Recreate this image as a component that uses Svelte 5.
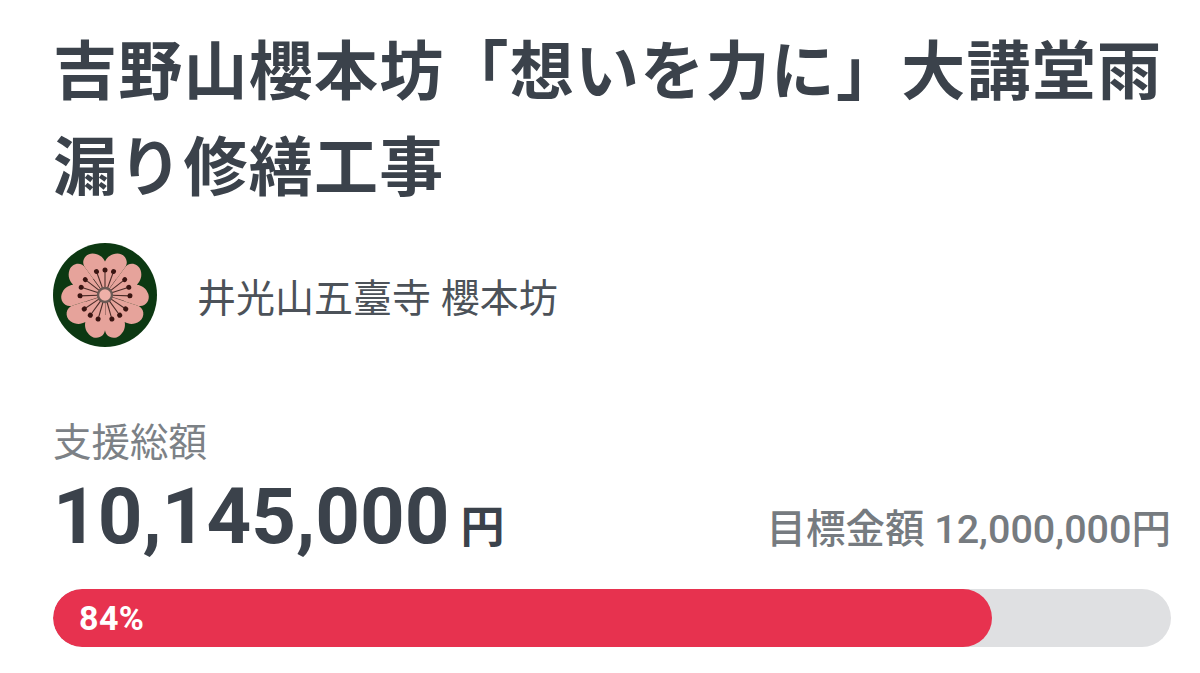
<script>
  const petals = [0, 72, 144, 216, 288];
  const offsets = [-20, 0, 20];
  const petal = 'M0 0 L19.4 -26.7 C25 -33 20 -41.5 12.5 -41.5 C6.5 -41.5 2 -38 0 -33.5 C-2 -38 -6.5 -41.5 -12.5 -41.5 C-20 -41.5 -25 -33 -19.4 -26.7 Z';
</script>

<main class="page">
  <h1 class="title">吉野山櫻本坊「想いを力に」大講堂雨漏り修繕工事</h1>

  <div class="owner">
    <svg class="emblem" viewBox="-52 -52 104 104" aria-hidden="true">
      <circle r="52" fill="#0c3812" />
      {#each petals as a}
        <g transform="rotate({a})">
          <path d={petal} fill="#e6a39b" />
          <line x1="0" y1="0" x2="0" y2="-20" stroke="#5a3d38" stroke-width="0.9" transform="rotate(36)" />
          {#each offsets as o}
            <g transform="rotate({o})">
              <line x1="0" y1="-7" x2="0" y2="-25" stroke="#4a2c28" stroke-width="1.1" />
              <circle cy="-25" r="2.5" fill="#3a1512" />
            </g>
          {/each}
        </g>
      {/each}
      <circle r="7" fill="#eeb0a8" stroke="#6a5a55" stroke-width="2.4" />
    </svg>
    <span class="owner-name">井光山五臺寺 櫻本坊</span>
  </div>

  <div class="label">支援総額</div>
  <div class="amounts">
    <div class="raised"><span class="num">10,145,000</span><span class="yen">円</span></div>
    <div class="goal"><span class="goal-label">目標金額</span> 12,000,000円</div>
  </div>

  <div class="bar">
    <div class="fill" style="width: 84%"><span class="pct">84%</span></div>
  </div>
</main>

<style>
  :global(body) {
    margin: 0;
    background: #fff;
  }
  .page {
    box-sizing: border-box;
    width: 1200px;
    height: 673px;
    padding: 25px 29px 0 53px;
    font-family: Roboto, "Noto Sans CJK JP", sans-serif;
    color: #3b424b;
    overflow: hidden;
  }
  .title {
    margin: 0;
    font-size: 64px;
    line-height: 96px;
    font-weight: 700;
    letter-spacing: 1.25px;
  }
  .owner {
    display: flex;
    align-items: center;
    gap: 40px;
    margin-top: 26px;
  }
  .emblem {
    width: 104px;
    height: 104px;
    flex: none;
  }
  .owner-name {
    font-size: 39px;
    color: #4c5259;
  }
  .label {
    margin-top: 74px;
    font-size: 38.5px;
    line-height: 44px;
    color: #7c8186;
  }
  .amounts {
    display: flex;
    justify-content: space-between;
    align-items: baseline;
    margin-top: 8px;
  }
  .raised {
    font-weight: 700;
    line-height: 88px;
  }
  .num {
    font-size: 78px;
  }
  .yen {
    font-size: 44px;
    margin-left: 11px;
  }
  .goal {
    font-size: 39.5px;
    font-weight: 500;
    color: #767b80;
  }
  .bar {
    margin-top: 7px;
    height: 58px;
    width: 1118px;
    border-radius: 29px;
    background: #dfe0e2;
    overflow: hidden;
  }
  .fill {
    height: 100%;
    box-sizing: border-box;
    background: #e7324f;
    border-radius: 29px;
    display: flex;
    align-items: center;
    padding-left: 26px;
  }
  .pct {
    font-size: 34px;
    font-weight: 700;
    color: #fff;
    letter-spacing: 0.4px;
  }
</style>
